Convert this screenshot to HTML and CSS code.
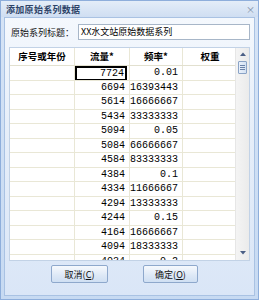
FILE: index.html
```html
<!DOCTYPE html>
<html>
<head>
<meta charset="utf-8">
<link rel="stylesheet" href="styles.css">
</head>
<body>
<div class="window">
  <div class="titlebar">
    <span class="title">添加原始系列数据</span>
    <span class="close">×</span>
  </div>
  <div class="body">
    <div class="field-row">
      <span class="label">原始系列标题：</span>
      <div class="input">XX水文站原始数据系列</div>
    </div>
    <div class="grid">
      <div class="grid-main">
        <div class="row head">
          <div class="cell h">序号或年份</div>
          <div class="cell h">流量*</div>
          <div class="cell h">频率*</div>
          <div class="cell h">权重</div>
        </div>
        <div class="row"><div class="cell"></div><div class="cell num"><span class="editor">7724</span></div><div class="cell num">0.01</div><div class="cell"></div></div>
        <div class="row"><div class="cell"></div><div class="cell num">6694</div><div class="cell num">16393443</div><div class="cell"></div></div>
        <div class="row"><div class="cell"></div><div class="cell num">5614</div><div class="cell num">16666667</div><div class="cell"></div></div>
        <div class="row"><div class="cell"></div><div class="cell num">5434</div><div class="cell num">33333333</div><div class="cell"></div></div>
        <div class="row"><div class="cell"></div><div class="cell num">5094</div><div class="cell num">0.05</div><div class="cell"></div></div>
        <div class="row"><div class="cell"></div><div class="cell num">5084</div><div class="cell num">66666667</div><div class="cell"></div></div>
        <div class="row"><div class="cell"></div><div class="cell num">4584</div><div class="cell num">83333333</div><div class="cell"></div></div>
        <div class="row"><div class="cell"></div><div class="cell num">4384</div><div class="cell num">0.1</div><div class="cell"></div></div>
        <div class="row"><div class="cell"></div><div class="cell num">4334</div><div class="cell num">11666667</div><div class="cell"></div></div>
        <div class="row"><div class="cell"></div><div class="cell num">4294</div><div class="cell num">13333333</div><div class="cell"></div></div>
        <div class="row"><div class="cell"></div><div class="cell num">4244</div><div class="cell num">0.15</div><div class="cell"></div></div>
        <div class="row"><div class="cell"></div><div class="cell num">4164</div><div class="cell num">16666667</div><div class="cell"></div></div>
        <div class="row"><div class="cell"></div><div class="cell num">4094</div><div class="cell num">18333333</div><div class="cell"></div></div>
        <div class="row"><div class="cell"></div><div class="cell num">4034</div><div class="cell num">0.2</div><div class="cell"></div></div>
      </div>
      <div class="scrollbar">
        <svg class="arrow" width="14" height="8" viewBox="0 0 14 8"><path d="M4 6 L7 2.5 L10 6 Z" fill="#4a5f86"/></svg>
        <div class="thumb"><i></i><i></i><i></i></div>
        <div class="track"></div>
        <svg class="arrow" width="14" height="8" viewBox="0 0 14 8"><path d="M4 2 L7 5.5 L10 2 Z" fill="#4a5f86"/></svg>
      </div>
    </div>
    <div class="buttons">
      <div class="btn btn-cancel">取消(<u>C</u>)</div>
      <div class="btn btn-ok">确定(<u>O</u>)</div>
    </div>
  </div>
</div>
</body>
</html>
```
FILE: styles.css
```css
* { box-sizing: border-box; }
html, body { margin: 0; padding: 0; }
body { width: 259px; height: 300px; overflow: hidden; background: #fff; }

.window {
  width: 259px;
  height: 300px;
  border: 1px solid #8eaedb;
  background: linear-gradient(#d6e4f6, #c7daf2);
  display: flex;
  flex-direction: column;
  font-family: "Noto Sans CJK SC", "Noto Sans", sans-serif;
}

.titlebar {
  height: 16px;
  display: flex;
  align-items: center;
  justify-content: space-between;
  padding: 0 3px 0 5px;
  background: linear-gradient(#e4edf8, #cfdef2);
}
.title {
  font-size: 9px;
  font-weight: bold;
  color: #2e4468;
  letter-spacing: 0.3px;
}
.close {
  font-size: 9px;
  color: #7a8aa3;
  line-height: 1;
}

.body {
  flex: 1;
  margin: 0 3px 3px 3px;
  border: 1px solid #a9c2e3;
  background: linear-gradient(#f4f8fd, #e6eef9 40%, #dae6f7);
  padding: 6px 4px 0 4px;
  display: flex;
  flex-direction: column;
}

.field-row {
  display: flex;
  align-items: center;
  height: 16px;
}
.label {
  font-size: 9px;
  color: #111;
  width: 69px;
  padding-left: 2px;
}
.input {
  flex: 1;
  height: 16px;
  border: 1px solid #a7b6c8;
  background: #fff;
  font-size: 9px;
  line-height: 14px;
  padding-left: 2px;
  color: #000;
}

.grid {
  margin-top: 7px;
  height: 214px;
  display: flex;
  border: 1px solid #c2d2e6;
  background: #fff;
  overflow: hidden;
}
.grid-main {
  width: 228px;
  overflow: hidden;
}
.row {
  display: grid;
  grid-template-columns: 65px 55px 53px 55px;
  height: 14.5px;
  border-bottom: 1px solid #e9e7d6;
}
.row.head {
  height: 18px;
  border-bottom: 1px solid #e2e0cf;
}
.cell {
  border-right: 1px solid #e9e7d6;
  overflow: hidden;
  white-space: nowrap;
}
.cell.h {
  font-size: 9.5px;
  font-weight: bold;
  color: #000;
  text-align: center;
  line-height: 17px;
}
.cell.num {
  font-family: "Liberation Mono", "DejaVu Sans Mono", monospace;
  font-size: 10px;
  text-align: right;
  line-height: 13px;
  padding-right: 4px;
  color: #000;
  position: relative;
}
.editor {
  position: absolute;
  left: 0;
  top: 0;
  right: 2px;
  bottom: -1px;
  border: 2px solid #000;
  background: #fff;
  padding-right: 1px;
  line-height: 11px;
}

.scrollbar {
  width: 14px;
  margin-left: 0;
  background: linear-gradient(90deg, #f4f4f4, #ebebeb);
  border-left: 1px solid #e6e6e6;
  display: flex;
  flex-direction: column;
  align-items: center;
  padding-top: 2px;
  padding-bottom: 3px;
}
.arrow { display: block; }
.thumb {
  margin-top: 3px;
  width: 9px;
  height: 13px;
  border: 1px solid #8aa3c6;
  border-radius: 1px;
  background: linear-gradient(90deg, #eaf1fb, #d4e1f2);
  display: flex;
  flex-direction: column;
  justify-content: center;
  align-items: center;
  gap: 1px;
}
.thumb i {
  display: block;
  width: 5px;
  height: 1px;
  background: #6b82a8;
}
.track { flex: 1; }

.buttons {
  display: flex;
  margin-top: 4px;
  padding-left: 42px;
  gap: 35px;
}
.btn {
  height: 18px;
  border: 1px solid #8ea8cc;
  border-radius: 2px;
  background: linear-gradient(#f6f9fd, #dde8f6 60%, #cfdff3);
  font-size: 9px;
  color: #111;
  display: flex;
  align-items: center;
  justify-content: center;
}
.btn-cancel { width: 57px; }
.btn-ok { width: 55px; }
.btn u { text-underline-offset: 1px; }
```
